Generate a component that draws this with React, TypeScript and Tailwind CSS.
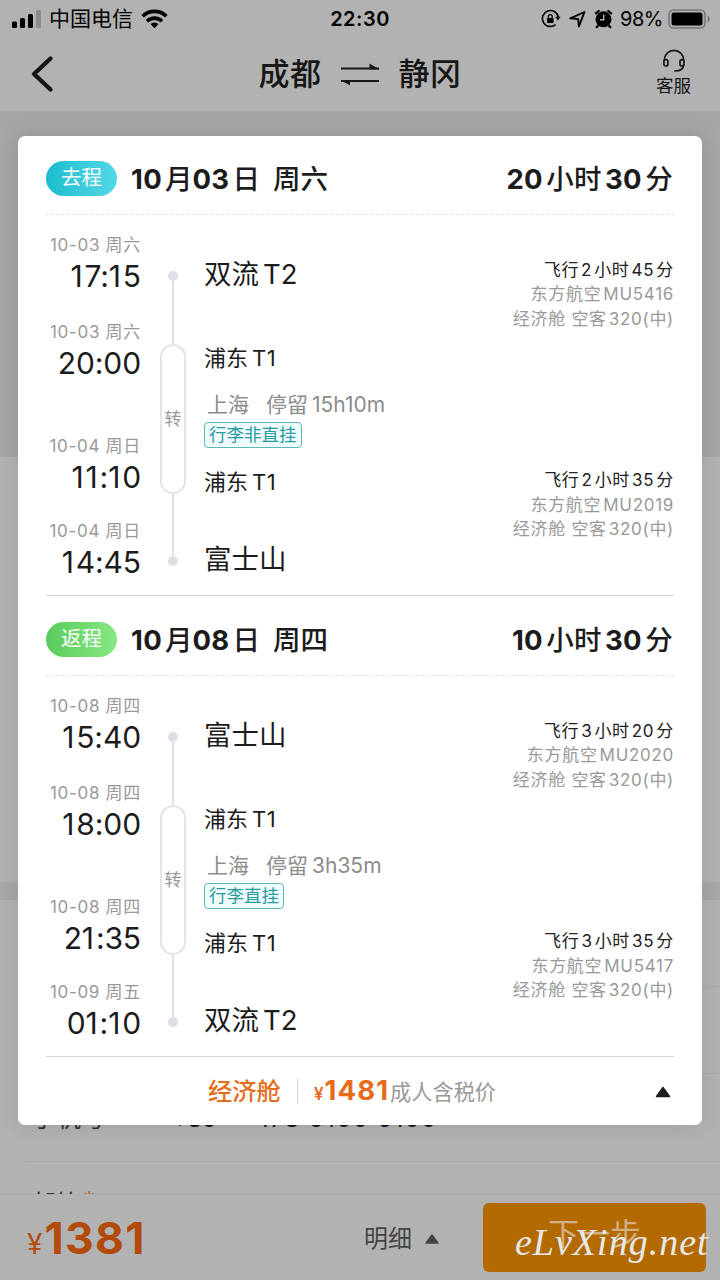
import { Fragment } from "react";

type Stop = { date: string; time: string; place: string };
type Flight = { duration: string; number: string; cabin: string };
type Leg = {
  label: string;
  badge: string;
  date: string;
  weekday: string;
  total: string;
  stops: [Stop, Stop, Stop, Stop];
  layover: string;
  baggage: string;
  flights: [Flight, Flight];
};

const legs: Leg[] = [
  {
    label: "去程",
    badge: "from-[#17bdce] to-[#52d8e6]",
    date: "10月03日",
    weekday: "周六",
    total: "20小时30分",
    stops: [
      { date: "10-03 周六", time: "17:15", place: "双流T2" },
      { date: "10-03 周六", time: "20:00", place: "浦东T1" },
      { date: "10-04 周日", time: "11:10", place: "浦东T1" },
      { date: "10-04 周日", time: "14:45", place: "富士山" },
    ],
    layover: "停留15h10m",
    baggage: "行李非直挂",
    flights: [
      { duration: "飞行2小时45分", number: "东方航空MU5416", cabin: "经济舱 空客320(中)" },
      { duration: "飞行2小时35分", number: "东方航空MU2019", cabin: "经济舱 空客320(中)" },
    ],
  },
  {
    label: "返程",
    badge: "from-[#58cc5c] to-[#87e784]",
    date: "10月08日",
    weekday: "周四",
    total: "10小时30分",
    stops: [
      { date: "10-08 周四", time: "15:40", place: "富士山" },
      { date: "10-08 周四", time: "18:00", place: "浦东T1" },
      { date: "10-08 周四", time: "21:35", place: "浦东T1" },
      { date: "10-09 周五", time: "01:10", place: "双流T2" },
    ],
    layover: "停留3h35m",
    baggage: "行李直挂",
    flights: [
      { duration: "飞行3小时20分", number: "东方航空MU2020", cabin: "经济舱 空客320(中)" },
      { duration: "飞行3小时35分", number: "东方航空MU5417", cabin: "经济舱 空客320(中)" },
    ],
  },
];

/** Sets Latin runs apart from the Chinese characters beside them. */
function Mixed({ text, latin }: { text: string; latin: string }) {
  const runs = text.match(/[A-Za-z0-9]+|[^A-Za-z0-9]+/g) ?? [];
  return (
    <>
      {runs.map((run, i) =>
        /^[A-Za-z0-9]/.test(run) ? (
          <span key={i} className={latin}>
            {run}
          </span>
        ) : (
          <Fragment key={i}>{run}</Fragment>
        ),
      )}
    </>
  );
}

function StatusBar() {
  return (
    <div className="grid h-9 grid-cols-[1fr_auto_1fr] items-center text-[20px] leading-9 text-black">
      <div className="flex items-center pl-3">
        <svg width="30" height="20" viewBox="0 0 30 20" className="mr-[7px] shrink-0">
          <rect x="0" y="12.5" width="5" height="6.5" rx="1.5" />
          <rect x="8" y="9" width="5" height="10" rx="1.5" />
          <rect x="16" y="5" width="5" height="14" rx="1.5" />
          <rect x="24" y="1" width="5" height="18" rx="1.5" fill="#8a8a8a" />
        </svg>
        <span className="text-[21px]">中国电信</span>
        <svg width="27" height="20" viewBox="0 0 27 20" className="ml-2 shrink-0" fill="none" stroke="#000" strokeWidth="3.6">
          <path d="M1.6 7.2a17 17 0 0 1 23.8 0" />
          <path d="M6 12.2a10.7 10.7 0 0 1 15 0" />
          <path d="M13.5 19.2l-4-4.1a5.8 5.8 0 0 1 8 0z" fill="#000" stroke="none" />
        </svg>
      </div>
      <span className="pt-px text-[20px] font-semibold tracking-[0.5px]">22:30</span>
      <div className="flex items-center justify-end pr-[9px]">
        <svg width="20" height="20" viewBox="0 0 20 20" fill="none" stroke="#000" strokeWidth="1.6">
          <path d="M17.3 8A8 8 0 1 0 14.6 15.6" />
          <path d="M14.3 7.8h5.2l-2.6 3.6z" fill="#000" stroke="none" />
          <rect x="6" y="9" width="6.6" height="5" rx="0.8" fill="#000" stroke="none" />
          <path d="M7.4 9V7.6a1.9 1.9 0 0 1 3.8 0V9" strokeWidth="1.3" />
        </svg>
        <svg width="17" height="18" viewBox="0 0 17 18" className="ml-2" fill="none" stroke="#000" strokeWidth="1.9" strokeLinejoin="round">
          <path d="M1.3 8.3L15.5 2 9.9 16.3 9.2 9.1z" />
        </svg>
        <svg width="19" height="20" viewBox="0 0 19 20" className="ml-[8px]">
          <circle cx="9.5" cy="10.3" r="8" />
          <path d="M1.8 4.4L4.8 2M17.2 4.4L14.2 2M4.2 16.4l-1.6 1.8M14.8 16.4l1.6 1.8" stroke="#000" strokeWidth="2.2" strokeLinecap="round" />
          <path d="M9.7 5.6v5.2H6" stroke="#b2b2b2" strokeWidth="1.4" fill="none" />
        </svg>
        <span className="ml-[7px] pt-px text-[20px] tracking-[-0.5px]">98%</span>
        <svg width="43" height="20" viewBox="0 0 43 20" className="ml-[5px]">
          <rect x="1" y="1" width="36" height="18" rx="4.5" fill="none" stroke="#777" strokeWidth="1.6" />
          <rect x="3.5" y="3.5" width="31" height="13" rx="2.5" />
          <path d="M39.6 6.5c3 1.4 3 5.6 0 7z" fill="#777" />
        </svg>
      </div>
    </div>
  );
}

function Header() {
  return (
    <header className="h-[111px] shrink-0 bg-[#b2b2b2]">
      <StatusBar />
      <div className="grid h-[75px] grid-cols-[1fr_auto_1fr] items-center text-[#171717]">
        <svg width="24" height="40" viewBox="0 0 24 40" className="ml-[30px]" fill="none" stroke="#171717" strokeWidth="4.4" strokeLinecap="round" strokeLinejoin="round">
          <path d="M20.5 4.5L4 20l16.5 15.5" />
        </svg>
        <div className="flex items-center text-[31px] leading-10 font-medium tracking-[0.5px]">
          <span>成都</span>
          <svg width="41" height="22" viewBox="0 0 41 22" className="mx-[18px]">
            <path d="M1 5.5h38M1 18h38" stroke="#171717" strokeWidth="2" />
            <path d="M29.5 0.5L39.5 6.4h-10zM0.5 17.3h9.5v5z" fill="#171717" />
          </svg>
          <span>静冈</span>
        </div>
        <div className="mr-[29px] flex flex-col items-center justify-self-end pb-px">
          <svg width="24" height="24" viewBox="0 0 24 24" fill="none" stroke="#171717" strokeWidth="1.7" strokeLinecap="round">
            <path d="M2.4 11.5V11a9.6 9.6 0 0 1 19.2 0v.5" />
            <rect x="1.9" y="10.6" width="4" height="6.4" rx="1.8" />
            <rect x="18" y="10.6" width="4" height="6.4" rx="1.8" />
            <path d="M21.5 16c0 4-3 6-8.6 6" />
          </svg>
          <span className="mt-px text-[17.5px] leading-6">客服</span>
        </div>
      </div>
    </header>
  );
}

function BookingPage() {
  return (
    <div className="flex h-[1280px] w-[720px] flex-col bg-[#b2b2b2]">
      <Header />
      <div className="h-[346px] shrink-0 bg-[#a6a6a6]" />
      <div className="h-[425px] shrink-0" />
      <div className="h-[18px] shrink-0 bg-[#a8a8a8]" />
      <div className="ml-[26px] h-[87px] shrink-0 border-b border-[#aaaaaa]" />
      <div className="ml-[26px] h-[87px] shrink-0 border-b border-[#aaaaaa]" />
      <div className="ml-[26px] flex h-[88px] shrink-0 items-center border-b border-[#aaaaaa] pt-[2px] pl-[6px] text-[24.5px] text-[#333]">
        <span className="w-[140px]">手机号</span>
        <span className="text-[24px] tracking-[-0.6px] text-[#171717]">+86</span>
        <span className="ml-[43px] text-[24px] tracking-[1.4px] text-[#171717]">178 5100 5100</span>
      </div>
      <div className="ml-[26px] flex h-[32px] shrink-0 items-start overflow-hidden pt-[24px] pl-[5px] text-[25px] leading-[36px] text-[#333]">
        <span>邮箱</span>
        <span className="ml-[2px] pt-[3px] leading-[24px] text-[#b26a1c]">*</span>
      </div>
      <footer className="flex h-[86px] shrink-0 border-t border-[#acacac] bg-[#b2b2b2]">
        <div className="flex w-[337px] items-baseline pt-px pl-[27px] text-[#b24a0c]">
          <span className="text-[28px] leading-[80px]">¥</span>
          <span className="ml-[2px] text-[44.5px] leading-[85px] font-bold tracking-[1.3px]">1381</span>
        </div>
        <div className="flex h-[84px] flex-1 items-center pt-[3px] pl-[27px] text-[24px] text-[#444]">
          明细
          <svg width="14" height="10" viewBox="0 0 14 10" className="ml-[13px]">
            <path d="M7 1L13 9H1z" fill="#444" stroke="#444" strokeWidth="1.4" strokeLinejoin="round" />
          </svg>
        </div>
        <div className="relative mt-2 mr-[14px] flex h-[69px] w-[223px] items-center justify-center rounded-[6px] bg-[#b26a00]">
          <span className="pb-[6px] text-[31px] text-[#d0b084]">下一步</span>
          <span className="absolute top-[17px] left-[32px] font-[Brush_Script_MT,Liberation_Serif,serif] text-[38px] leading-[44px] tracking-[1px] whitespace-nowrap text-[#e8e8e8] italic">
            eLvXing.net
          </span>
        </div>
      </footer>
    </div>
  );
}

function StopTime({ stop }: { stop: Stop }) {
  return (
    <div className="flex h-[62px] flex-col items-end">
      <span className="text-[17px] leading-5 tracking-[0.7px] whitespace-pre text-[#999]">{stop.date}</span>
      <span className="text-[30px] leading-[42px] tracking-[-0.1px]">
        {stop.time.split(/(1)/).map((part, i) =>
          part === "1" ? (
            <span key={i} className="tracking-[1.8px]">
              1
            </span>
          ) : (
            part
          ),
        )}
      </span>
    </div>
  );
}

function Track() {
  return (
    <div className="flex w-[26px] flex-col items-center pt-[56px]">
      <span className="size-[10px] rounded-full bg-[#dcdfe3]" />
      <span className="h-[63px] w-[2px] bg-[#dfe2e5]" />
      <span className="flex h-[150px] w-[26px] items-center justify-center rounded-full border-2 border-[#e1e4e8] pt-[2px] text-[17px] text-[#999]">
        转
      </span>
      <span className="h-[62px] w-[2px] bg-[#dfe2e5]" />
      <span className="size-[10px] rounded-full bg-[#dcdfe3]" />
    </div>
  );
}

function FlightInfo({ flight }: { flight: Flight }) {
  return (
    <div className="flex flex-col items-end text-[17px] leading-[24.4px] tracking-[0.7px] text-[#999]">
      <span className="text-[#222]">
        <Mixed text={flight.duration} latin="mx-[2px]" />
      </span>
      <span>
        <Mixed text={flight.number} latin="ml-[2px]" />
      </span>
      <span>
        <Mixed text={flight.cabin} latin="ml-[2px]" />
      </span>
    </div>
  );
}

function LegSection({ leg }: { leg: Leg }) {
  const [a, b, c, d] = leg.stops;
  return (
    <section className="h-[461px] border-b border-[#d6d6d6]">
      <div className="flex h-[80px] items-center border-b border-dashed border-[#e2e2e2] pt-[8px] text-[27.5px] font-medium text-[#1c1c1c]">
        <span className={`flex h-[35px] w-[71px] items-center justify-center rounded-full bg-gradient-to-r pb-px text-[20.5px] font-normal text-white ${leg.badge}`}>
          {leg.label}
        </span>
        <span className="mt-[2px] ml-[14px]">
          <Mixed text={leg.date} latin="font-bold mr-[3px] tracking-[0.3px]" />
        </span>
        <span className="mt-[2px] ml-[13px]">{leg.weekday}</span>
        <span className="mt-[2px] mr-px ml-auto tracking-[0.2px]">
          <Mixed text={leg.total} latin="font-bold mx-[3.5px]" />
        </span>
      </div>
      <div className="flex text-[#1c1c1c]">
        <div className="flex w-[95px] flex-col pt-[20px]">
          <StopTime stop={a} />
          <div className="h-[25px]" />
          <StopTime stop={b} />
          <div className="h-[52px]" />
          <StopTime stop={c} />
          <div className="h-[23px]" />
          <StopTime stop={d} />
        </div>
        <div className="ml-[19px]">
          <Track />
        </div>
        <div className="ml-[18px] flex flex-col items-start pt-[38px]">
          <span className="h-[42px] text-[27.5px] leading-[42px]">
            <Mixed text={a.place} latin="ml-[4px]" />
          </span>
          <span className="mt-[47px] h-8 text-[22px] leading-8">
            <Mixed text={b.place} latin="ml-[4px] tracking-[0.6px]" />
          </span>
          <span className="mt-[15px] ml-[3px] h-8 text-[21px] leading-8 text-[#8c8c8c]">
            上海<span className="ml-[17px]"><Mixed text={leg.layover} latin="ml-[4px]" /></span>
          </span>
          <span className="mt-[1px] flex h-[26px] items-center rounded-[4px] border border-[#5cb7bd] bg-[#f0fcfc] px-[4px] text-[17.5px] text-[#2a9aa3]">
            {leg.baggage}
          </span>
          <span className="mt-[18px] h-8 text-[22px] leading-8">
            <Mixed text={c.place} latin="ml-[4px] tracking-[0.6px]" />
          </span>
          <span className="mt-[40px] h-[42px] text-[27.5px] leading-[42px]">
            <Mixed text={d.place} latin="ml-[4px]" />
          </span>
        </div>
        <div className="ml-auto flex flex-col gap-[137px] pt-[43px]">
          <FlightInfo flight={leg.flights[0]} />
          <FlightInfo flight={leg.flights[1]} />
        </div>
      </div>
    </section>
  );
}

function ItineraryCard() {
  return (
    <div className="flex h-[989px] w-[684px] flex-col rounded-[7px] bg-white px-[28px] shadow-[0_0_22px_rgba(0,0,0,0.12)]">
      <div className="-mt-px">
        {legs.map((leg) => (
          <LegSection key={leg.label} leg={leg} />
        ))}
      </div>
      <div className="flex h-[68px] items-center pl-[162px]">
        <span className="text-[24.3px] font-medium text-[#e56c1b]">经济舱</span>
        <span className="mx-[16px] h-[25px] w-px bg-[#d0d0d0]" />
        <span className="flex items-baseline text-[#e56c1b]">
          <span className="text-[17px] font-semibold">¥</span>
          <span className="ml-[1px] text-[27.5px] font-bold tracking-[1.1px]">1481</span>
          <span className="ml-[1px] text-[21.2px] text-[#999]">成人含税价</span>
        </span>
        <svg width="16" height="12" viewBox="0 0 16 12" className="mt-[2px] mr-[3px] ml-auto">
          <path d="M8 1.5L14.5 10.5h-13z" fill="#1c1c1c" stroke="#1c1c1c" strokeWidth="1.4" strokeLinejoin="round" />
        </svg>
      </div>
    </div>
  );
}

export default function App() {
  return (
    <div className="relative h-[1280px] w-[720px] overflow-hidden font-[Inter,Noto_Sans_CJK_SC,sans-serif]" lang="zh-CN">
      <BookingPage />
      <div className="absolute top-[136px] left-[18px]">
        <ItineraryCard />
      </div>
    </div>
  );
}
